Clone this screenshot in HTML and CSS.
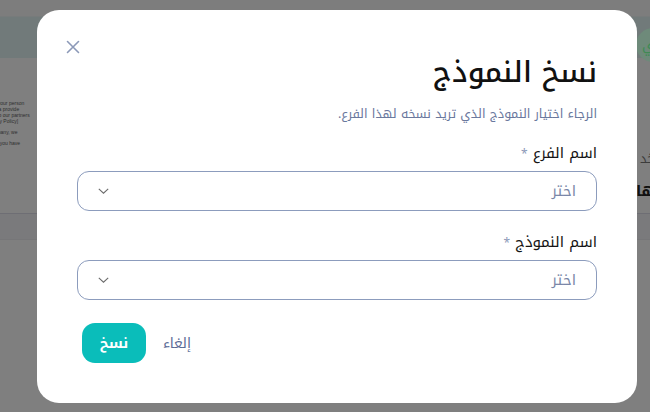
FILE: index.html
```html
<!DOCTYPE html>
<html lang="ar" dir="rtl">
<head>
<meta charset="utf-8">
<title>نسخ النموذج</title>
<link rel="stylesheet" href="styles.css">
</head>
<body>
<div class="page">
  <div class="topstrip"></div>
  <div class="band">
    <span class="badge">ي</span>
  </div>
  <div class="content">
    <div class="tinytext">
      <p>w (Pr)</p>
      <p>ersonal your person</p>
      <p>(Pa) Data provide</p>
      <p>lo Data to our partners</p>
      <p>e [Privacy Policy]</p>
      <p class="gap">the company, we</p>
      <p class="gap">unless if you have</p>
    </div>
    <div class="sidetext">
      <span class="s1">خد</span>
      <span class="s2">ها</span>
    </div>
  </div>
  <div class="rowline"></div>
  <div class="rowband"></div>
</div>

<div class="overlay">
  <div class="modal" role="dialog">
    <button class="close" aria-label="إغلاق">
      <svg width="14" height="14" viewBox="0 0 14 14"><path d="M1.5 1.5 L12.5 12.5 M12.5 1.5 L1.5 12.5" stroke="#8c99b8" stroke-width="1.6" fill="none" stroke-linecap="round"/></svg>
    </button>
    <h1 class="title">نسخ النموذج</h1>
    <p class="subtitle">الرجاء اختيار النموذج الذي تريد نسخه لهذا الفرع.</p>

    <div class="field">
      <label class="label">اسم الفرع <span class="req">*</span></label>
      <div class="select">
        <span class="placeholder">اختر</span>
        <svg class="chev" width="11" height="6" viewBox="0 0 11 6"><path d="M0.8 0.8 L5.5 5.2 L10.2 0.8" stroke="#6b6b6b" stroke-width="1.1" fill="none"/></svg>
      </div>
    </div>

    <div class="field">
      <label class="label">اسم النموذج <span class="req">*</span></label>
      <div class="select">
        <span class="placeholder">اختر</span>
        <svg class="chev" width="11" height="6" viewBox="0 0 11 6"><path d="M0.8 0.8 L5.5 5.2 L10.2 0.8" stroke="#6b6b6b" stroke-width="1.1" fill="none"/></svg>
      </div>
    </div>

    <div class="actions">
      <button class="cancel">إلغاء</button>
      <button class="primary">نسخ</button>
    </div>
  </div>
</div>
</body>
</html>
```
FILE: styles.css
```css
* { box-sizing: border-box; }
html, body { margin: 0; padding: 0; }
body {
  width: 650px;
  height: 412px;
  overflow: hidden;
  background: #7f7f7f;
  font-family: "Noto Kufi Arabic", "Noto Sans Arabic", "DejaVu Sans", sans-serif;
  position: relative;
}
.page { width: 650px; height: 412px; }
.topstrip { height: 17px; background: #7d7d7d; border-bottom: 1px solid #777b7b; }
.band {
  height: 41px;
  background: #717a7a;
  position: relative;
}
.badge {
  position: absolute;
  left: 636px;
  top: 11px;
  width: 34px;
  height: 34px;
  border-radius: 50%;
  background: #6e8a7a;
  color: #3f8a55;
  font-size: 14px;
  display: flex;
  align-items: center;
  direction: ltr;
  padding-left: 6px;
}
.content { height: 155px; position: relative; }
.tinytext {
  position: absolute;
  right: 610px;
  top: 29px;
  direction: ltr;
  text-align: left;
  font-family: "Liberation Sans", sans-serif;
  font-size: 5px;
  line-height: 6px;
  color: #2e2e2e;
  width: 60px;
  white-space: nowrap;
}
.tinytext p { margin: 0 0 0; }
.tinytext p:first-child { margin-bottom: 7px; }
.tinytext p.gap { margin-top: 5px; }
.sidetext { position: absolute; left: 636px; top: 88px; display: flex; flex-direction: column; gap: 6px; }
.s1 { color: #3c3c3c; font-size: 13px; }
.s2 { color: #111; font-size: 15px; font-weight: bold; }
.rowline { height: 1px; background: #6e6e74; }
.rowband { height: 26px; background: #7a7a7c; border-bottom: 1px solid #767678; }

.overlay {
  position: absolute;
  inset: 0;
}
.modal {
  position: absolute;
  left: 37px;
  top: 10px;
  width: 600px;
  height: 393px;
  background: #fff;
  border-radius: 22px;
  padding: 43px 40px 0 40px;
}
.close {
  position: absolute;
  left: 28px;
  top: 29px;
  width: 16px;
  height: 16px;
  padding: 0;
  border: 0;
  background: none;
  display: flex;
  align-items: center;
  justify-content: center;
}
.title {
  margin: 0;
  font-size: 29px;
  font-weight: 500;
  color: #111;
  line-height: 40px;
  text-align: right;
}
.subtitle {
  margin: 11px 0 0;
  font-size: 12.5px;
  color: #6a789d;
  line-height: 20px;
}
.field { margin-top: 18px; display: flex; flex-direction: column; }
.field + .field { margin-top: 20px; }
.label {
  font-size: 15px;
  color: #151515;
  line-height: 22px;
  margin-bottom: 6px;
}
.req { color: #8c99b8; font-size: 12px; }
.select {
  height: 40px;
  border: 1px solid #8c9cbd;
  border-radius: 12px;
  display: flex;
  align-items: center;
  justify-content: space-between;
  padding: 0 20px 0 20px;
}
.placeholder { font-size: 15px; color: #7a87a8; }
.chev { display: block; }
.actions {
  margin-top: 23px;
  display: flex;
  flex-direction: row;
  justify-content: flex-end;
  align-items: center;
  gap: 17px;
  padding-left: 5px;
}
.primary {
  width: 64px;
  height: 40px;
  border: 0;
  border-radius: 13px;
  background: #0abdba;
  color: #fff;
  font-family: inherit;
  font-weight: bold;
  font-size: 14px;
}
.cancel {
  border: 0;
  background: none;
  padding: 0;
  font-family: inherit;
  font-size: 14px;
  color: #5b6b96;
}
```
